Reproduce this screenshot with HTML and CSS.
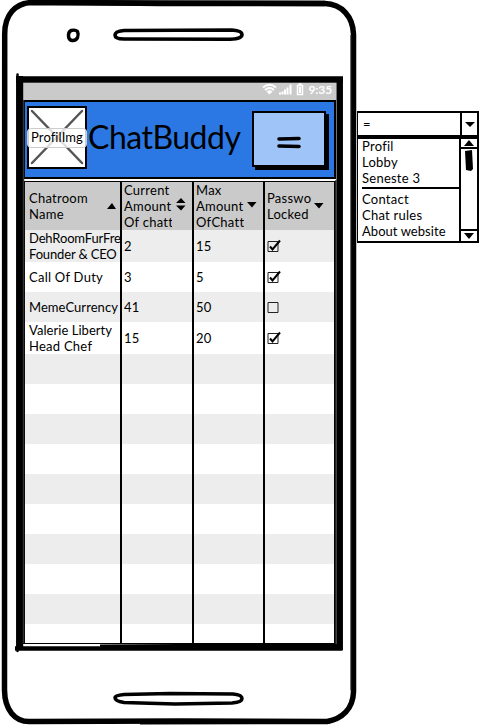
FILE: index.html
```html
<!DOCTYPE html>
<html lang="en">
<head>
<meta charset="utf-8">
<title>ChatBuddy</title>
<link rel="stylesheet" href="styles.css">
</head>
<body>
<main class="board">
  <section class="phone">
    <div class="screen">
      <div class="status">
        <svg width="44" height="14" viewBox="0 0 44 14" fill="none" stroke="#fff">
          <path d="M1 4.500Q7.500-1 14 4.500M3 7Q7.500 3 12 7" stroke-width="2"/>
          <path d="M4.500 8.500Q7.500 6 10.500 8.500L7.500 11.500Z" fill="#fff" stroke="none"/>
          <path d="M18 11.500V9.500M20.500 11.500V8.500M23 11.500V6.500M25.500 11.500V4.500M28.500 11.500V1.500" stroke-width="2"/>
          <path d="M35.500 2.500H40.500V11.500H35.500ZM36.500 1H39.500" stroke-width="1.500"/>
          <path d="M37 4H39V10H37Z" fill="#fff" stroke="none"/>
        </svg>
        <span class="clock">9:35</span>
      </div>
      <header class="appbar">
        <div class="avatar">
          <svg class="cross" width="56" height="58" viewBox="0 0 56 58"><path d="M3 3L53 55M53 3L3 55" stroke="#555" stroke-width="2.500" stroke-linecap="round"/></svg>
          <span class="avatar-label">ProfilImg</span>
        </div>
        <h1 class="title">ChatBuddy</h1>
        <button class="menu-button" type="button" aria-label="Menu">
          <svg width="24" height="13" viewBox="0 0 24 13"><path d="M2 3L22 2.500M2 10L22 10.500" stroke="#000" stroke-width="3.600" stroke-linecap="round"/></svg>
        </button>
      </header>
      <div class="table">
        <div class="row head">
          <div class="cell"><span>Chatroom<br>Name</span><svg class="sort s1" width="10" height="6"><path d="M0 6L5 0L9 6Z"/></svg></div>
          <div class="cell"><span class="clip">Current<br>Amount<br>Of chatters</span><svg class="sort s2" width="10" height="13"><path d="M0 5L5 0L9.500 5ZM0 7.500H9.500L5 12.500Z"/></svg></div>
          <div class="cell"><span class="clip">Max<br>Amount<br>OfChatters</span><svg class="sort s3" width="10" height="6"><path d="M0 0H9.500L5 5.500Z"/></svg></div>
          <div class="cell"><span class="clip">Passwo<br>Locked</span><svg class="sort s4" width="10" height="6"><path d="M0 0H9.500L5 5.500Z"/></svg></div>
        </div>
        <div class="row tall"><div class="cell"><span><span class="tight">DehRoomFurFre</span><br><span class="tight">Founder &amp; CEO</span></span></div><div class="cell">2</div><div class="cell">15</div><div class="cell"><svg class="check" width="14" height="14"><path class="box" d="M1 2.500H11V12.500H1Z"/><path class="tick" d="M3 7.500L5.500 10.500L13 1.500"/></svg></div></div>
        <div class="row"><div class="cell">Call Of Duty</div><div class="cell">3</div><div class="cell">5</div><div class="cell"><svg class="check" width="14" height="14"><path class="box" d="M1 2.500H11V12.500H1Z"/><path class="tick" d="M3 7.500L5.500 10.500L13 1.500"/></svg></div></div>
        <div class="row"><div class="cell"><span class="snug">MemeCurrency</span></div><div class="cell">41</div><div class="cell">50</div><div class="cell"><svg class="check" width="14" height="14"><path class="box" d="M1 2.500H11V12.500H1Z"/></svg></div></div>
        <div class="row tall"><div class="cell"><span><span class="snug">Valerie Liberty</span><br>Head Chef</span></div><div class="cell">15</div><div class="cell">20</div><div class="cell"><svg class="check" width="14" height="14"><path class="box" d="M1 2.500H11V12.500H1Z"/><path class="tick" d="M3 7.500L5.500 10.500L13 1.500"/></svg></div></div>
        <div class="row"><div class="cell"></div><div class="cell"></div><div class="cell"></div><div class="cell"></div></div>
        <div class="row"><div class="cell"></div><div class="cell"></div><div class="cell"></div><div class="cell"></div></div>
        <div class="row"><div class="cell"></div><div class="cell"></div><div class="cell"></div><div class="cell"></div></div>
        <div class="row"><div class="cell"></div><div class="cell"></div><div class="cell"></div><div class="cell"></div></div>
        <div class="row"><div class="cell"></div><div class="cell"></div><div class="cell"></div><div class="cell"></div></div>
        <div class="row"><div class="cell"></div><div class="cell"></div><div class="cell"></div><div class="cell"></div></div>
        <div class="row"><div class="cell"></div><div class="cell"></div><div class="cell"></div><div class="cell"></div></div>
        <div class="row"><div class="cell"></div><div class="cell"></div><div class="cell"></div><div class="cell"></div></div>
        <div class="row"><div class="cell"></div><div class="cell"></div><div class="cell"></div><div class="cell"></div></div>
        <div class="row last"><div class="cell"></div><div class="cell"></div><div class="cell"></div><div class="cell"></div></div>
      </div>
    </div>
    <!-- Hand-drawn phone outline laid over the screen -->
    <svg class="frame" width="357" height="725" viewBox="0 0 357 725" fill="none" stroke="#000">
      <path d="M4.700 34C4.700 15 15 3 32 2.500L140 3L325 3.500C342 4 353 17 353.500 34V692C353 709 342 719 327 721.500L180 721L30 721.500C15 722 4.700 710 4.500 690Z" stroke-width="5.500"/>
      <path d="M30 2L160 3.500L325 3.500" stroke-width="5.500"/>
      <path d="M140 722.500L330 722" stroke-width="4"/>
      <path d="M71 30.500C67 33 68 40 72 40.500C78 41 79 35 77.500 31.500C76 30 73 30 71 30.500Z" stroke-width="3.400"/>
      <path d="M124 30.500L232 30C239 30.500 242 32 242 34.500C242 38 237 39 230 39.300L124 39C117 39 115 37 115 35C115 32 118 31 124 30.500Z" stroke-width="3.600"/>
      <path d="M124 694.500L170 693.500L233 694C239 694.500 242 696 242 698.500C242 701 238 702.500 232 703L175 704L124 702.500C117 701.500 115 700 115 697.500C115 696 118 695 124 694.500Z" stroke-width="3.600"/>
      <path d="M16 79.500H343M339.700 77V650" stroke-width="6.500"/>
      <path d="M19.700 76V649" stroke-width="7"/>
      <path d="M17.500 74.500V651" stroke-width="2.500" stroke-linecap="round"/>
      <path d="M15 648.500H342.500" stroke-width="4.500"/>
      <path d="M100 646L180 645.500H338" stroke-width="3"/>
      <path d="M23.500 100V643M336 180V644" stroke-width="1.500" stroke="#333"/>
      <path d="M350.700 35V690" stroke-width="1" stroke="#555"/>
    </svg>
  </section>
  <aside class="dropdown">
    <div class="select"><span>=</span><div class="arrow"><svg width="10" height="5"><path d="M0 0H10L5 5Z"/></svg></div></div>
    <div class="list">
      <ul class="options">
        <li>Profil</li><li>Lobby</li><li>Seneste 3</li>
        <li class="rule"></li>
        <li>Contact</li><li>Chat rules</li><li class="snug">About website</li>
      </ul>
      <div class="scroll">
        <div class="step up"><svg width="10" height="6"><path d="M0 6L5 0L10 6Z"/></svg></div>
        <svg class="thumb" width="8" height="21"><path d="M0 1L7 0L8 19L6 21L1 20Z"/></svg>
        <div class="step down"><svg width="10" height="6"><path d="M0 0H10L5 6Z"/></svg></div>
      </div>
    </div>
  </aside>
</main>
</body>
</html>
```
FILE: styles.css
```css
* { box-sizing: border-box; }
body { margin: 0; background: #fff; color: #000; font: 13px/16px Lato, "Open Sans", sans-serif; letter-spacing: .25px; }
svg { display: block; flex: none; }
.board { width: 479px; height: 725px; display: flex; overflow: hidden; }
.phone { position: relative; width: 357px; height: 725px; padding: 83px 21px 0 23px; flex: none; }
.frame { position: absolute; left: 0; top: 0; pointer-events: none; }
.screen { width: 313px; height: 563px; background: #fff; }
.status { height: 17px; background: #cacaca; display: flex; align-items: center; justify-content: flex-end; gap: 2px; padding: 0 4px 4px 0; }
.clock { color: #fff; font-weight: 700; font-size: 12px; line-height: 13px; letter-spacing: -.1px; }
.status svg { margin-top: 1px; }
.appbar { height: 79px; border: 2px solid #000; background: #2b78e4; display: flex; padding: 4px 8px 0 2px; }
.avatar { position: relative; width: 60px; height: 63px; border: 2px solid #000; background: #fff; flex: none; }
.avatar-label { position: absolute; left: -2px; top: 20px; width: 60px; height: 20px; line-height: 17px; text-align: center; border: 1px solid #ccc; border-radius: 4px; background: rgba(255,255,255,.8); letter-spacing: .1px; white-space: nowrap; }
.title { margin: 0 0 0 1px; width: 155px; font-size: 32px; line-height: 62px; font-weight: 400; white-space: nowrap; letter-spacing: -.5px; flex: none; }
.menu-button { margin: 5px 0 0 9px; width: 74px; height: 56px; padding: 6px 0 0; border: 2px solid #000; background: #9fc5f8; box-shadow: 3px 3px 0 #000; display: flex; align-items: center; justify-content: center; flex: none; }
.table { margin-top: 2px; height: 463px; border: 2px solid #000; border-top-width: 1px; border-bottom-width: 1px; overflow: hidden; }
.row { display: grid; grid-template-columns: 97px 72px 71px 70px; height: 30px; background: #fff; }
.row:nth-child(even) { background: #ededed; }
.row.head { height: 48px; background: #cacaca; }
.row.tall { height: 32px; }
.row.last { height: 19px; }
.cell { border-right: 2px solid #000; padding-left: 2px; display: flex; align-items: center; overflow: hidden; white-space: nowrap; }
.cell:first-child { padding-left: 4px; }
.cell:last-child { border-right: 0; }
.tight { letter-spacing: -.15px; }
.snug { letter-spacing: .05px; }
.clip { width: 48px; overflow: hidden; flex: none; }
.sort { margin-left: auto; }
.s1 { margin-right: 3px; }
.s2, .s3 { margin: 0 6px 4px auto; }
.s4 { margin: 0 0 0 -1px; }
.s3 { margin-bottom: 2px; }
.box { fill: none; stroke: #222; stroke-width: 1; }
.tick { fill: none; stroke: #000; stroke-width: 2; }
.dropdown { width: 122px; padding-top: 111px; }
.select { height: 26px; border: 2px solid #000; border-left-width: 1px; display: flex; justify-content: space-between; align-items: center; padding: 0 0 0 5px; }
.arrow { width: 17px; height: 100%; border-left: 2px solid #000; display: flex; align-items: center; justify-content: center; }
.list { height: 106px; border: 2px solid #000; border-left-width: 1px; display: flex; justify-content: space-between; }
.options { list-style: none; margin: -1px 0 0; padding: 0 0 0 4px; width: 102px; white-space: nowrap; }
.rule { height: 2px; background: #000; margin: 1px 0 2px; }
.scroll { width: 18px; border-left: 2px solid #000; display: flex; flex-direction: column; align-items: center; }
.step { width: 100%; height: 10px; display: flex; align-items: center; justify-content: center; flex: none; }
.up { border-bottom: 2px solid #000; }
.down { border-top: 2px solid #000; margin-top: auto; height: 12px; }
.thumb { margin-top: 1px; }
```
